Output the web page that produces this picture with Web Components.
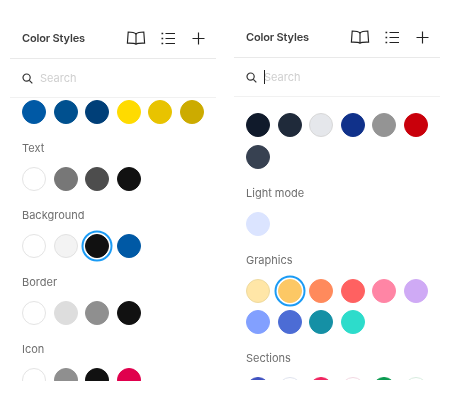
<!DOCTYPE html>
<html lang="en">
<head>
<meta charset="utf-8">
<title>Color Styles</title>
<style>
  html, body { margin: 0; height: 100%; background: #fff; overflow: hidden; }
  body { font: 11px/16px Inter, "Liberation Sans", sans-serif; color: #333; }
  style-page { --blur: blur(.3px); }
</style>
</head>
<body>
<style-page>
  <color-panel>
    <panel-header slot="header" title-text="Color Styles"></panel-header>
    <search-row slot="search"></search-row>
    <swatch-group>
      <color-swatch color="#0059a5"></color-swatch><color-swatch color="#00508f"></color-swatch><color-swatch color="#003f78"></color-swatch><color-swatch color="#ffdb00"></color-swatch><color-swatch color="#e8c300"></color-swatch><color-swatch color="#ccab00"></color-swatch>
    </swatch-group>
    <swatch-group label="Text">
      <color-swatch color="#fff" edge="#e4e4e4"></color-swatch><color-swatch color="#777"></color-swatch><color-swatch color="#4d4d4d"></color-swatch><color-swatch color="#111"></color-swatch>
    </swatch-group>
    <swatch-group label="Background">
      <color-swatch color="#fff" edge="#e4e4e4"></color-swatch><color-swatch color="#f3f3f3" edge="#e2e2e2"></color-swatch><color-swatch color="#111" selected></color-swatch><color-swatch color="#0059a5"></color-swatch>
    </swatch-group>
    <swatch-group label="Border">
      <color-swatch color="#fff" edge="#e4e4e4"></color-swatch><color-swatch color="#ddd"></color-swatch><color-swatch color="#8f8f8f"></color-swatch><color-swatch color="#111"></color-swatch>
    </swatch-group>
    <swatch-group label="Icon">
      <color-swatch color="#fff" edge="#e4e4e4"></color-swatch><color-swatch color="#8f8f8f"></color-swatch><color-swatch color="#111"></color-swatch><color-swatch color="#e0004d"></color-swatch>
    </swatch-group>
  </color-panel>
  <color-panel variant="focused">
    <panel-header slot="header" title-text="Color Styles"></panel-header>
    <search-row slot="search" focused></search-row>
    <swatch-group>
      <color-swatch color="#101a2b"></color-swatch><color-swatch color="#1f2a3a"></color-swatch><color-swatch color="#e5e7eb" edge="#d8d8d8"></color-swatch><color-swatch color="#10318a"></color-swatch><color-swatch color="#949494"></color-swatch><color-swatch color="#c9000b"></color-swatch><color-swatch color="#374151"></color-swatch>
    </swatch-group>
    <swatch-group label="Light mode">
      <color-swatch color="#dbe4ff"></color-swatch>
    </swatch-group>
    <swatch-group label="Graphics">
      <color-swatch color="#ffe6a7" edge="#eeda9f"></color-swatch><color-swatch color="#fcc865" selected></color-swatch><color-swatch color="#ff8a5c"></color-swatch><color-swatch color="#ff6161"></color-swatch><color-swatch color="#ff85a5"></color-swatch><color-swatch color="#cfaaf5"></color-swatch><color-swatch color="#82a0ff"></color-swatch><color-swatch color="#4c6cd5"></color-swatch><color-swatch color="#1590a5"></color-swatch><color-swatch color="#2ddccb"></color-swatch>
    </swatch-group>
    <swatch-group label="Sections">
      <color-swatch color="#3f51c0"></color-swatch><color-swatch color="#fff" edge="#dfe3ee"></color-swatch><color-swatch color="#f0245f"></color-swatch><color-swatch color="#fff" edge="#f2d8e2"></color-swatch><color-swatch color="#0a9a50"></color-swatch><color-swatch color="#fff" edge="#d8ecdf"></color-swatch>
    </swatch-group>
  </color-panel>
</style-page>
<script>
  function shadow(el, html) {
    el.attachShadow({ mode: 'open' }).innerHTML = html;
  }
  customElements.define('style-page', class extends HTMLElement {
    constructor() {
      super();
      shadow(this, `<style>
        :host { display: flex; gap: 18px; padding: 0 10px; height: 400px; box-sizing: border-box; filter: var(--blur); background: #fff; }
        ::slotted(color-panel:first-child) { margin-top: 1px; }
      </style><slot></slot>`);
    }
  });
  customElements.define('color-panel', class extends HTMLElement {
    constructor() {
      super();
      shadow(this, `<style>
        :host { display: flex; flex-direction: column; width: 206px; height: 380px; overflow: hidden; }
        :host([variant="focused"]) .list { padding-top: 16px; }
        .list { flex: 1; min-height: 0; overflow: hidden; padding: 2px 12px 0; display: flex; flex-direction: column; gap: 16px; }
      </style>
      <slot name="header"></slot>
      <slot name="search"></slot>
      <div class="list"><slot></slot></div>`);
    }
  });
  customElements.define('panel-header', class extends HTMLElement {
    constructor() {
      super();
      shadow(this, `<style>
        :host { display: flex; align-items: center; box-sizing: border-box; height: 58px; padding: 17px 11px 0 12px; border-bottom: 1px solid #e9e9e9; }
        .title { flex: 1; font: 600 11px/16px Inter, "Liberation Sans", sans-serif; color: #3d3d3d; letter-spacing: -.15px; }
        .icons { display: flex; align-items: center; gap: 14px; }
        svg { display: block; fill: none; stroke: #222; stroke-width: 1.15; }
      </style>
      <span class="title"></span>
      <span class="icons">
        <svg width="20" height="14" viewBox="0 0 20 14" style="margin-right:1px"><path d="M10 3C8.6 1.5 6.6 1 2.2 1L1.4 12.2C5 12.2 8.2 12 10 13.2C11.8 12 15 12.2 18.6 12.2L17.8 1C13.4 1 11.4 1.5 10 3Z"/><path d="M10 3V13"/></svg>
        <svg width="14" height="13" viewBox="0 0 14 13"><path d="M4.5 1.5H14M4.5 6.5H14M4.5 11.5H14"/><path d="M.5 1.5H2.2M.5 6.5H2.2M.5 11.5H2.2" stroke-width="1.3"/></svg>
        <svg width="13" height="13" viewBox="0 0 13 13" style="margin-left:3px"><path d="M6.5 .5V12.5M.5 6.5H12.5"/></svg>
      </span>`);
      this.shadowRoot.querySelector('.title').textContent = this.getAttribute('title-text');
    }
  });
  customElements.define('search-row', class extends HTMLElement {
    constructor() {
      super();
      shadow(this, `<style>
        :host { display: flex; align-items: center; gap: 7px; box-sizing: border-box; height: 39px; padding: 0 12px; border-bottom: 1px solid #f1f1f1; }
        svg { display: block; fill: none; stroke: #333; stroke-width: 1.2; flex: none; }
        .text { font: 11px/16px Inter, "Liberation Sans", sans-serif; color: #cfcfcf; position: relative; }
        .caret { display: none; position: absolute; left: 0; top: 1px; width: 1px; height: 14px; background: #222; }
        :host([focused]) .caret { display: block; }
      </style>
      <svg width="11" height="11" viewBox="0 0 11 11"><circle cx="4.6" cy="4.6" r="3.6"/><path d="M7.3 7.3L10.3 10.3"/></svg>
      <span class="text"><span class="caret"></span>Search</span>`);
    }
  });
  customElements.define('swatch-group', class extends HTMLElement {
    constructor() {
      super();
      shadow(this, `<style>
        :host { display: block; flex: none; }
        .label { font: 11px/16px Inter, "Liberation Sans", sans-serif; color: #6e6e6e; margin-bottom: 11px; }
        .label:empty { display: none; }
        .row { display: flex; flex-wrap: wrap; gap: 7.5px; }
      </style>
      <div class="label"></div>
      <div class="row"><slot></slot></div>`);
      this.shadowRoot.querySelector('.label').textContent = this.getAttribute('label') || '';
    }
  });
  customElements.define('color-swatch', class extends HTMLElement {
    constructor() {
      super();
      shadow(this, `<style>
        :host { display: block; width: 24px; height: 24px; border-radius: 50%; box-sizing: border-box; flex: none; background: var(--c); border: 1px solid var(--e, var(--c)); }
        :host([selected]) { box-shadow: 0 0 0 1.5px #fff, 0 0 0 3.5px #1a9bf5; }
      </style>`);
      this.style.setProperty('--c', this.getAttribute('color'));
      if (this.hasAttribute('edge')) this.style.setProperty('--e', this.getAttribute('edge'));
    }
  });
</script>
</body>
</html>
